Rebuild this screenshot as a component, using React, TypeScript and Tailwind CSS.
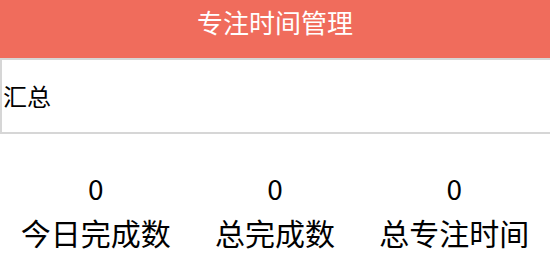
export default function App() {
  const stats = [
    { v: "0", label: "今日完成数" },
    { v: "0", label: "总完成数" },
    { v: "0", label: "总专注时间" },
  ];
  return (
    <div
      className="w-[550px] h-[275px] bg-white overflow-hidden"
      style={{ fontFamily: '"Noto Sans CJK SC", "Noto Sans", sans-serif' }}
    >
      <div className="h-[58px] bg-[#f06c5c] flex justify-center pt-[9px] text-white text-[26px] leading-[26px]">
        专注时间管理
      </div>
      <div className="h-[76px] border-t-[2px] border-l-[2px] border-b-[2px] border-[#d6d6d6] flex items-center pl-[1px] text-[24px] text-black">
        汇总
      </div>
      <div className="grid grid-cols-3 px-[6px] pt-[36px]">
        {stats.map((s) => (
          <div key={s.label} className="flex flex-col items-center text-black">
            <div className="text-[28px] leading-[36px]">{s.v}</div>
            <div className="mt-[8px] text-[30px] leading-[36px]">{s.label}</div>
          </div>
        ))}
      </div>
    </div>
  );
}
